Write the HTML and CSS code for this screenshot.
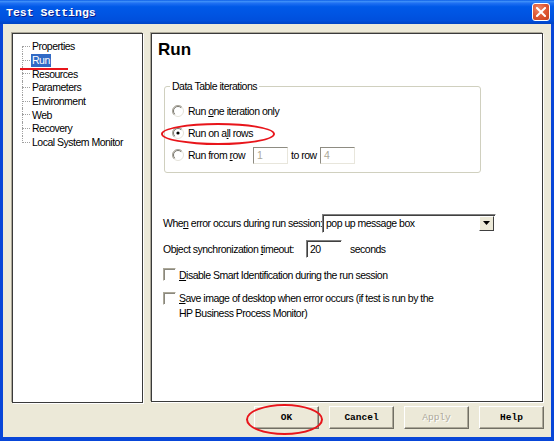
FILE: index.html
```html
<!DOCTYPE html>
<html>
<head>
<meta charset="utf-8">
<link rel="stylesheet" href="styles.css">
</head>
<body>
<div class="window">
  <div class="titlebar">
    <span class="title">Test Settings</span>
    <span class="close"><svg width="10" height="10" viewBox="0 0 10 10"><path d="M1 1 L9 9 M9 1 L1 9" stroke="#fff" stroke-width="2" stroke-linecap="square"/></svg></span>
  </div>
  <div class="frame">
    <div class="panes">
      <div class="tree-pane">
        <ul class="tree">
          <li><span>Properties</span></li>
          <li class="sel"><span>Run</span></li>
          <li><span>Resources</span></li>
          <li><span>Parameters</span></li>
          <li><span>Environment</span></li>
          <li><span>Web</span></li>
          <li><span>Recovery</span></li>
          <li><span>Local System Monitor</span></li>
        </ul>
      </div>
      <div class="page">
        <h1 class="heading">Run</h1>
        <fieldset class="group">
          <legend>Data Table iterations</legend>
          <div class="opt">
            <svg class="radio" width="12" height="12" viewBox="0 0 12 12"><circle cx="6" cy="6" r="5.5" fill="#fff" stroke="#e4e2da"/><path d="M2.1 9.9 A5.5 5.5 0 0 1 9.9 2.1" fill="none" stroke="#a8a59a"/><path d="M2.8 9.2 A4.5 4.5 0 0 1 9.2 2.8" fill="none" stroke="#7a7870"/></svg>
            <span class="lbl">Run <u>o</u>ne iteration only</span>
          </div>
          <div class="opt">
            <svg class="radio" width="12" height="12" viewBox="0 0 12 12"><circle cx="6" cy="6" r="5.5" fill="#fff" stroke="#e4e2da"/><path d="M2.1 9.9 A5.5 5.5 0 0 1 9.9 2.1" fill="none" stroke="#a8a59a"/><path d="M2.8 9.2 A4.5 4.5 0 0 1 9.2 2.8" fill="none" stroke="#7a7870"/><circle cx="6" cy="6" r="1.6" fill="#000"/></svg>
            <span class="lbl">Run on a<u>l</u>l rows</span>
          </div>
          <div class="opt">
            <svg class="radio" width="12" height="12" viewBox="0 0 12 12"><circle cx="6" cy="6" r="5.5" fill="#fff" stroke="#e4e2da"/><path d="M2.1 9.9 A5.5 5.5 0 0 1 9.9 2.1" fill="none" stroke="#a8a59a"/><path d="M2.8 9.2 A4.5 4.5 0 0 1 9.2 2.8" fill="none" stroke="#7a7870"/></svg>
            <span class="lbl from-label">Run from <u>r</u>ow</span>
            <span class="edit disabled">1</span>
            <span class="lbl to-label">to row</span>
            <span class="edit disabled">4</span>
          </div>
        </fieldset>
        <div class="row when">
          <span class="lbl when-label">Whe<u>n</u> error occurs during run session:</span>
          <span class="combo"><span class="combo-text">pop up message box</span><span class="drop"><svg width="7" height="4" viewBox="0 0 7 4"><path d="M0 0 H7 L3.5 4 Z" fill="#000"/></svg></span></span>
        </div>
        <div class="row sync">
          <span class="lbl sync-label">Object synchronization <u>t</u>imeout:</span>
          <span class="edit timeout">20</span>
          <span class="lbl secs">seconds</span>
        </div>
        <div class="check-row">
          <span class="check"></span>
          <span><u>D</u>isable Smart Identification during the run session</span>
        </div>
        <div class="check-row two">
          <span class="check"></span>
          <span><u>S</u>ave image of desktop when error occurs (if test is run by the<br>HP Business Process Monitor)</span>
        </div>
      </div>
    </div>
    <div class="buttons">
      <span class="btn">OK</span>
      <span class="btn">Cancel</span>
      <span class="btn disabled">Apply</span>
      <span class="btn">Help</span>
    </div>
  </div>
  <div class="mark mark-run"></div>
  <div class="mark ellipse ellipse-rows"></div>
  <div class="mark ellipse ellipse-ok"></div>
</div>
</body>
</html>
```
FILE: styles.css
```css
html, body {
  margin: 0;
  padding: 0;
  background: #fff;
}
body {
  font-family: "Liberation Sans", Arial, sans-serif;
  font-size: 10.5px;
  letter-spacing: -0.5px;
  color: #000;
}
.window {
  position: relative;
  width: 554px;
  height: 441px;
  display: flex;
  flex-direction: column;
  overflow: hidden;
}
.titlebar {
  flex: none;
  height: 24px;
  display: flex;
  align-items: center;
  justify-content: space-between;
  padding-left: 6px;
  background: linear-gradient(to bottom, #0b5de6 0%, #3d8ef8 6%, #1e6ff2 14%, #0059e8 28%, #0054e2 60%, #004fdc 85%, #0043c4 100%);
}
.title {
  font-family: "Liberation Mono", monospace;
  font-weight: bold;
  font-size: 11.5px;
  letter-spacing: 0;
  color: #fff;
  text-shadow: 1px 1px 0 #0a1e8c;
}
.close {
  width: 16px;
  height: 16px;
  margin-right: 4px;
  border: 1px solid #fff;
  border-radius: 3px;
  background: radial-gradient(circle at 35% 30%, #f08a6c 0%, #e05a36 45%, #c7401e 100%);
  display: flex;
  align-items: center;
  justify-content: center;
}
.frame {
  flex: 1;
  background: #ece9d8;
  border-style: solid;
  border-color: #0846d8;
  border-width: 0 3px 4px 3px;
  padding: 9px 8px 0 9px;
  display: flex;
  flex-direction: column;
}
.panes {
  display: flex;
  gap: 8px;
  height: 370px;
  align-items: flex-start;
}
.tree-pane, .page {
  box-sizing: border-box;
  background: #fff;
  border: 1px solid #3a3a3a;
  box-shadow: -1px -1px 0 #aca899, 1px 1px 0 #fff;
}
.tree-pane {
  width: 131px;
  height: 370px;
}
.page {
  flex: 1;
  height: 369px;
  padding-left: 6px;
}
.tree {
  list-style: none;
  margin: 0;
  padding: 6px 0 0 0;
}
.tree li {
  position: relative;
  height: 13.7px;
  padding-left: 18px;
  display: flex;
  align-items: center;
}
.tree li span {
  display: inline-block;
  height: 13px;
  line-height: 13px;
  padding: 0 1px;
}
.tree li.sel span {
  background: #316ac5;
  color: #fff;
}
.tree li::before {
  content: "";
  position: absolute;
  left: 9px;
  width: 8px;
  top: 6px;
  border-top: 1px dotted #a0a0a0;
}
.tree li::after {
  content: "";
  position: absolute;
  left: 9px;
  top: 0;
  bottom: 0;
  border-left: 1px dotted #a0a0a0;
}
.tree li:first-child::after { top: 6px; }
.tree li:last-child::after { bottom: 7px; }
.heading {
  margin: 6px 0 0 0;
  font-size: 17px;
  line-height: 20px;
  font-weight: bold;
  letter-spacing: 0;
}
.group {
  box-sizing: border-box;
  width: 317px;
  min-width: 0;
  margin: 20px 0 0 6px;
  padding: 7px 7px 6px 7px;
  border: 1px solid #d0d0bf;
  border-radius: 3px;
}
.group legend {
  padding: 0 2px;
  margin-left: -2px;
  line-height: 13px;
}
.lbl {
  flex: none;
  white-space: nowrap;
}
.opt {
  height: 22px;
  display: flex;
  align-items: center;
}
.radio {
  flex: none;
  margin-right: 4px;
}
.from-label { width: 65px; }
.to-label { width: 29px; margin-left: 3px; }
.edit {
  flex: none;
  box-sizing: border-box;
  height: 17px;
  width: 35px;
  padding-left: 3px;
  line-height: 15px;
  background: #fff;
  border: 1px solid;
  border-color: #8e8c82 #e8e6dc #e8e6dc #8e8c82;
}
.edit.disabled { color: #aca899; }
.row {
  display: flex;
  align-items: center;
  height: 18px;
  margin-left: 5px;
}
.when { margin-top: 41px; }
.when-label { width: 159px; }
.combo {
  flex: none;
  box-sizing: border-box;
  width: 174px;
  height: 19px;
  display: flex;
  align-items: stretch;
  background: #fff;
  border: 1px solid;
  border-color: #808080 #fff #fff #808080;
  box-shadow: inset 1px 1px 0 #404040;
}
.combo-text {
  flex: 1;
  padding-left: 3px;
  line-height: 17px;
  white-space: nowrap;
}
.drop {
  flex: none;
  width: 15px;
  box-sizing: border-box;
  margin: 1px 1px 1px 0;
  background: #ece9d8;
  border: 1px solid;
  border-color: #fff #404040 #404040 #fff;
  display: flex;
  align-items: center;
  justify-content: center;
}
.sync { margin-top: 8px; }
.sync-label { width: 143px; }
.edit.timeout {
  width: 36px;
  height: 18px;
  line-height: 16px;
  border-color: #808080 #fff #fff #808080;
  box-shadow: inset 1px 1px 0 #404040;
}
.secs { margin-left: 8px; }
.check-row {
  display: flex;
  align-items: flex-start;
  margin: 9px 0 0 5px;
  line-height: 16px;
  white-space: nowrap;
}
.check-row.two {
  margin-top: 8px;
  line-height: 15px;
}
.check {
  flex: none;
  box-sizing: border-box;
  width: 13px;
  height: 13px;
  margin: 1px 3px 0 0;
  background: #fff;
  border: 1px solid;
  border-color: #aca899 #fff #fff #aca899;
  box-shadow: inset 1px 1px 0 #8a887e;
}
.buttons {
  display: flex;
  justify-content: flex-end;
  gap: 10px;
  margin-top: 3px;
  margin-right: -1px;
}
.btn {
  box-sizing: border-box;
  width: 65px;
  height: 23px;
  display: flex;
  align-items: center;
  justify-content: center;
  font-family: "Liberation Mono", monospace;
  font-size: 9.5px;
  font-weight: bold;
  letter-spacing: 0;
  background: #ece9d8;
  border: 1px solid;
  border-color: #fff #716f64 #716f64 #fff;
  box-shadow: inset -1px -1px 0 #aca899;
}
.btn.disabled {
  color: #aca899;
  font-weight: normal;
  text-shadow: 1px 1px 0 #fff;
}
.mark {
  position: absolute;
  pointer-events: none;
}
.mark-run {
  left: 20px;
  top: 68px;
  width: 48px;
  height: 2px;
  background: #e8151b;
}
.ellipse {
  box-sizing: border-box;
  border: 2px solid #e8151b;
  border-radius: 50%;
}
.ellipse-rows {
  left: 161px;
  top: 123px;
  width: 114px;
  height: 22px;
}
.ellipse-ok {
  left: 246px;
  top: 404px;
  width: 77px;
  height: 31px;
}
```
